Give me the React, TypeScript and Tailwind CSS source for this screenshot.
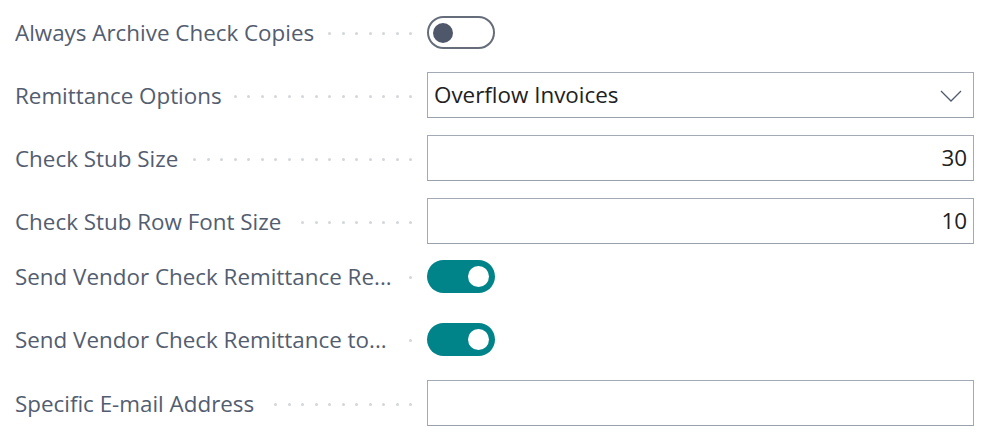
import React from "react";

const font = { fontFamily: '"Open Sans", "Noto Sans", sans-serif' };

function Dots() {
  return (
    <div className="flex-1 flex justify-end items-center overflow-hidden gap-[10.5px] ml-3 mr-[15px] min-w-0">
      {Array.from({ length: 40 }).map((_, i) => (
        <span key={i} className="shrink-0 w-[3px] h-[3px] rounded-full bg-[#d3d6db]" />
      ))}
    </div>
  );
}

function Label({ text }: { text: string }) {
  return (
    <div className="w-[427px] shrink-0 flex items-center pl-[15px] pt-[2px]">
      <span className="whitespace-nowrap text-[22.4px] text-[#535d6f] leading-none">{text}</span>
      <Dots />
    </div>
  );
}

function Toggle({ on }: { on: boolean }) {
  if (on) {
    return (
      <div className="w-[68px] h-[33px] rounded-full bg-[#008489] flex items-center justify-end pr-[6px]">
        <span className="w-[21px] h-[21px] rounded-full bg-white" />
      </div>
    );
  }
  return (
    <div className="w-[68px] h-[33px] rounded-full border-2 border-[#666d7a] bg-white flex items-center pl-[4px]">
      <span className="w-[20px] h-[20px] rounded-full bg-[#4f586b]" />
    </div>
  );
}

function Field({ value, align = "left", chevron = false }: { value?: string; align?: "left" | "right"; chevron?: boolean }) {
  return (
    <div className="w-[547px] h-[46px] border border-[#a3aab6] border-b-[#9aa1ad] bg-white flex items-center px-[6px] pt-[1px]">
      <span className={`flex-1 text-[22.4px] text-[#212121] leading-none ${align === "right" ? "text-right" : "text-left"}`}>
        {value}
      </span>
      {chevron && (
        <svg width="22" height="12" viewBox="0 0 22 12" className="mr-[5px]">
          <path d="M1 1 L11 11 L21 1" fill="none" stroke="#505a6e" strokeWidth="1.3" />
        </svg>
      )}
    </div>
  );
}

export default function App() {
  return (
    <div className="w-[1000px] h-[441px] bg-white overflow-hidden" style={font}>
      <div className="flex items-center h-[33px] mt-[16px]">
        <Label text="Always Archive Check Copies" />
        <Toggle on={false} />
      </div>
      <div className="flex items-center h-[46px] mt-[23px]">
        <Label text="Remittance Options" />
        <Field value="Overflow Invoices" chevron />
      </div>
      <div className="flex items-center h-[46px] mt-[17px]">
        <Label text="Check Stub Size" />
        <Field value="30" align="right" />
      </div>
      <div className="flex items-center h-[46px] mt-[17px]">
        <Label text="Check Stub Row Font Size" />
        <Field value="10" align="right" />
      </div>
      <div className="flex items-center h-[33px] mt-[16px]">
        <Label text="Send Vendor Check Remittance Re..." />
        <Toggle on />
      </div>
      <div className="flex items-center h-[33px] mt-[30px]">
        <Label text="Send Vendor Check Remittance to..." />
        <Toggle on />
      </div>
      <div className="flex items-center h-[46px] mt-[24px]">
        <Label text="Specific E-mail Address" />
        <Field />
      </div>
    </div>
  );
}
